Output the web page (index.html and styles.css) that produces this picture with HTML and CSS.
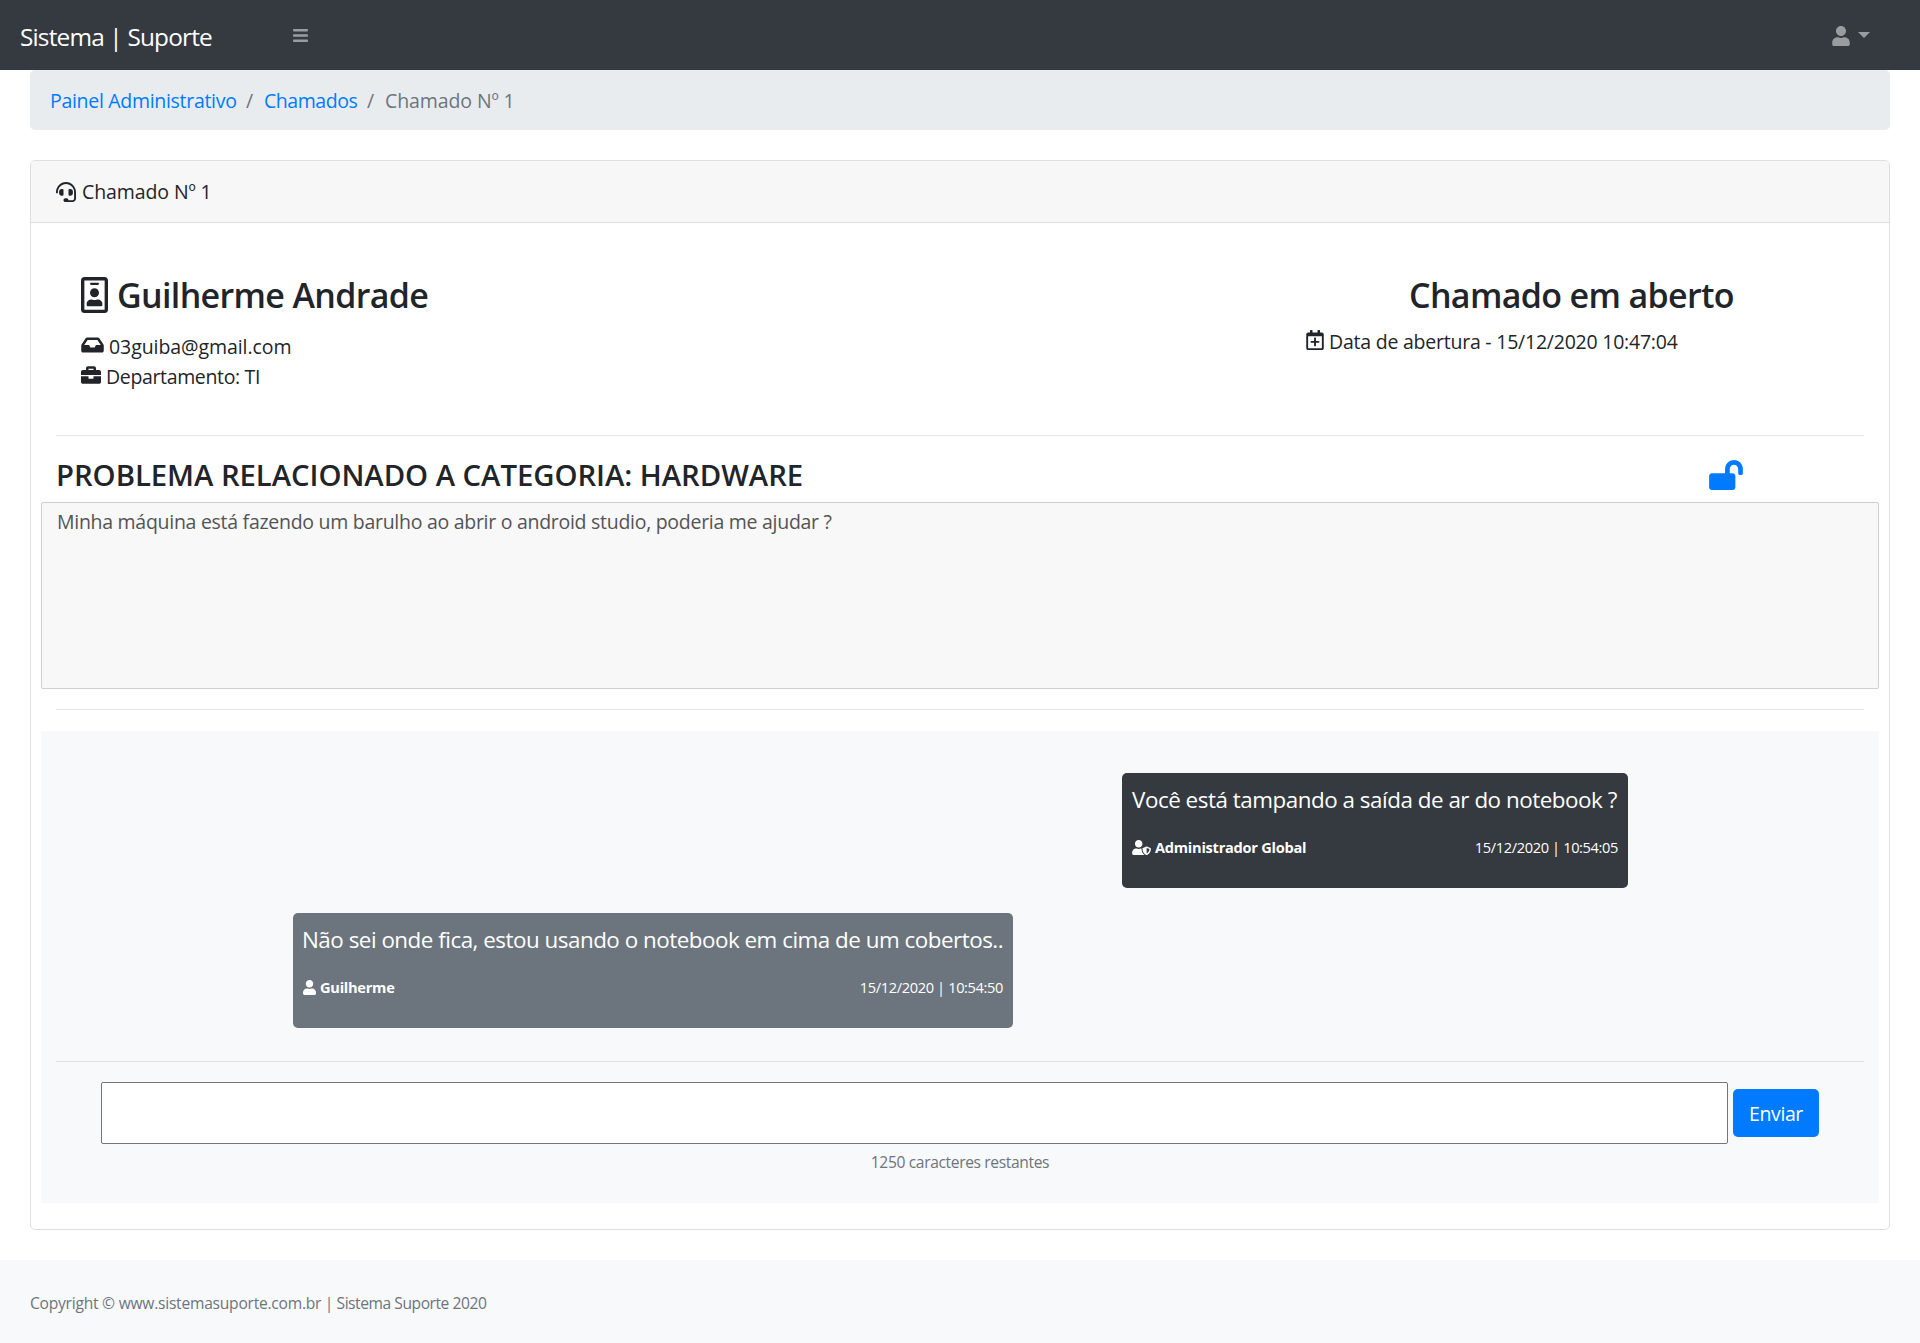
FILE: index.html
```html
<!DOCTYPE html>
<html lang="pt-br">
<head>
<meta charset="utf-8">
<title>Sistema | Suporte</title>
<link rel="stylesheet" href="styles.css">
</head>
<body>
<nav class="topnav">
  <a class="brand">Sistema | Suporte</a>
  <svg class="icon-bars" viewBox="0 0 448 512"><path d="M16 132h416c8.8 0 16-7.2 16-16V76c0-8.800-7.200-16-16-16H16C7.200 60 0 67.200 0 76v40c0 8.800 7.200 16 16 16zm0 160h416c8.800 0 16-7.200 16-16v-40c0-8.800-7.200-16-16-16H16c-8.800 0-16 7.200-16 16v40c0 8.800 7.200 16 16 16zm0 160h416c8.800 0 16-7.200 16-16v-40c0-8.800-7.200-16-16-16H16c-8.800 0-16 7.200-16 16v40c0 8.800 7.200 16 16 16z"/></svg>
  <div class="user-menu">
    <svg class="icon-user" viewBox="0 0 448 512"><path d="M224 256c70.700 0 128-57.300 128-128S294.700 0 224 0 96 57.300 96 128s57.300 128 128 128zm89.600 32h-16.700c-22.200 10.200-46.900 16-72.900 16s-50.600-5.800-72.900-16h-16.700C60.200 288 0 348.200 0 422.400V464c0 26.500 21.500 48 48 48h352c26.500 0 48-21.500 48-48v-41.600c0-74.200-60.200-134.400-134.400-134.400z"/></svg>
    <span class="caret"></span>
  </div>
</nav>

<main class="content">
  <ol class="breadcrumb">
    <li class="crumb-panel"><a>Painel Administrativo</a></li>
    <li class="slash">/</li>
    <li class="crumb-list"><a>Chamados</a></li>
    <li class="slash">/</li>
    <li class="crumb-current">Chamado Nº 1</li>
  </ol>

  <section class="card">
    <header class="card-header">
      <svg class="icon-headset" viewBox="0 0 512 512"><path d="M192 208c0-17.670-14.330-32-32-32h-16c-35.350 0-64 28.650-64 64v48c0 35.350 28.650 64 64 64h16c17.670 0 32-14.330 32-32V208zm176 144c35.350 0 64-28.650 64-64v-48c0-35.350-28.650-64-64-64h-16c-17.670 0-32 14.330-32 32v112c0 17.670 14.330 32 32 32h16zM256 0C113.180 0 4.580 118.830 0 256v16c0 8.840 7.160 16 16 16h16c8.840 0 16-7.160 16-16v-16c0-114.690 93.310-208 208-208s208 93.310 208 208h-.12c.08 2.430.12 165.720.12 165.720 0 23.350-18.930 42.280-42.280 42.280H320c0-26.510-21.490-48-48-48h-32c-26.510 0-48 21.490-48 48s21.490 48 48 48h181.720c49.860 0 90.280-40.420 90.280-90.280V256C507.420 118.830 398.820 0 256 0z"/></svg>
      <span>Chamado Nº 1</span>
    </header>

    <div class="info">
      <div class="person">
        <h3>
          <svg class="icon-badge" viewBox="0 0 384 512"><path d="M336 0H48C21.500 0 0 21.500 0 48v416c0 26.500 21.500 48 48 48h288c26.500 0 48-21.500 48-48V48c0-26.500-21.500-48-48-48zm0 464H48V48h288v416zM144 112h96c8.800 0 16-7.200 16-16s-7.200-16-16-16h-96c-8.800 0-16 7.200-16 16s7.200 16 16 16zm48 176c35.300 0 64-28.700 64-64s-28.700-64-64-64-64 28.700-64 64 28.700 64 64 64zm-89.600 128h179.200c12.400 0 22.400-8.600 22.400-19.200v-19.200c0-31.800-30.100-57.600-67.200-57.600-10.800 0-18.700 8-44.800 8-26.900 0-33.400-8-44.800-8-37.100 0-67.200 25.800-67.200 57.600v19.200c0 10.600 10 19.200 22.400 19.200z"/></svg>
          <span>Guilherme Andrade</span>
        </h3>
        <p class="email">
          <svg class="icon-inbox" viewBox="0 0 576 512"><path d="M567.938 243.908L462.250 85.374A48.003 48.003 0 0 0 422.311 64H153.689a48 48 0 0 0-39.938 21.374L8.062 243.908A47.994 47.994 0 0 0 0 270.533V400c0 26.510 21.490 48 48 48h480c26.510 0 48-21.490 48-48V270.533a47.994 47.994 0 0 0-8.062-26.625zM162.252 128h251.497l85.333 128H376l-32 64H232l-32-64H76.918l85.334-128z"/></svg>
          <span>03guiba@gmail.com</span>
        </p>
        <p class="department">
          <svg class="icon-briefcase" viewBox="0 0 512 512"><path d="M320 336c0 8.840-7.160 16-16 16h-96c-8.840 0-16-7.160-16-16v-48H0v144c0 25.600 22.400 48 48 48h416c25.600 0 48-22.400 48-48V288H320v48zm144-208h-80V80c0-25.600-22.400-48-48-48H176c-25.600 0-48 22.400-48 48v48H48c-25.600 0-48 22.400-48 48v80h512v-80c0-25.600-22.400-48-48-48zm-144 0H192V96h128v32z"/></svg>
          <span>Departamento: TI</span>
        </p>
      </div>
      <div class="status">
        <h3>Chamado em aberto</h3>
        <p>
          <svg class="icon-calendar" viewBox="0 0 448 512"><path d="M336 292v24c0 6.600-5.400 12-12 12h-76v76c0 6.600-5.400 12-12 12h-24c-6.600 0-12-5.400-12-12v-76h-76c-6.600 0-12-5.400-12-12v-24c0-6.600 5.400-12 12-12h76v-76c0-6.600 5.400-12 12-12h24c6.600 0 12 5.400 12 12v76h76c6.600 0 12 5.400 12 12zm112-180v352c0 26.500-21.500 48-48 48H48c-26.500 0-48-21.500-48-48V112c0-26.500 21.500-48 48-48h48V12c0-6.600 5.400-12 12-12h40c6.600 0 12 5.400 12 12v52h128V12c0-6.600 5.400-12 12-12h40c6.600 0 12 5.400 12 12v52h48c26.500 0 48 21.500 48 48zm-48 346V160H48v298c0 3.300 2.700 6 6 6h340c3.300 0 6-2.700 6-6z"/></svg>
          <span>Data de abertura - 15/12/2020 10:47:04</span>
        </p>
      </div>
    </div>

    <hr>

    <div class="category">
      <h4>PROBLEMA RELACIONADO A CATEGORIA: HARDWARE</h4>
      <svg class="icon-unlock" viewBox="0 0 576 512"><path d="M423.500 0C339.500.3 272 69.500 272 153.500V224H48c-26.500 0-48 21.500-48 48v192c0 26.500 21.500 48 48 48h352c26.500 0 48-21.500 48-48V272c0-26.500-21.500-48-48-48h-48v-71.100c0-39.600 31.700-72.500 71.300-72.900 40-.4 72.700 32.100 72.700 72v80c0 13.300 10.700 24 24 24h32c13.300 0 24-10.700 24-24v-80C576 68 507.500-.3 423.500 0z"/></svg>
    </div>
    <div class="description">Minha máquina está fazendo um barulho ao abrir o android studio, poderia me ajudar ?</div>

    <hr>

    <div class="chat">
      <article class="message message-admin">
        <p class="message-text">Você está tampando a saída de ar do notebook ?</p>
        <div class="message-meta">
          <svg class="icon-shield" viewBox="0 0 640 512"><path d="M622.300 271.100l-115.200-45c-4.100-1.600-12.600-3.700-22.200 0l-115.200 45c-10.700 4.200-17.700 14-17.700 24.900 0 111.600 68.700 188.800 132.900 213.900 9.600 3.700 18 1.600 22.200 0C558.400 489.900 640 420.500 640 296c0-10.900-7-20.700-17.700-24.900zM496 462.400V273.300l95.500 37.300c-5.600 87.100-60.900 135.400-95.500 151.800zM224 256c70.700 0 128-57.300 128-128S294.700 0 224 0 96 57.300 96 128s57.300 128 128 128zm96 40c0-2.500.8-4.800 1.100-7.200-2.500-.1-4.900-.8-7.500-.8h-16.700c-22.200 10.200-46.900 16-72.900 16s-50.600-5.800-72.900-16h-16.700C60.200 288 0 348.200 0 422.400V464c0 26.500 21.500 48 48 48h352c6.800 0 13.300-1.500 19.200-4-54-42.900-99.200-116.700-99.200-212z"/></svg>
          <strong>Administrador Global</strong>
          <time>15/12/2020 | 10:54:05</time>
        </div>
      </article>
      <article class="message message-client">
        <p class="message-text">Não sei onde fica, estou usando o notebook em cima de um cobertos..</p>
        <div class="message-meta">
          <svg class="icon-client" viewBox="0 0 448 512"><path d="M224 256c70.700 0 128-57.300 128-128S294.700 0 224 0 96 57.300 96 128s57.300 128 128 128zm89.600 32h-16.700c-22.200 10.200-46.900 16-72.900 16s-50.600-5.800-72.900-16h-16.700C60.200 288 0 348.200 0 422.400V464c0 26.500 21.500 48 48 48h352c26.500 0 48-21.500 48-48v-41.600c0-74.200-60.200-134.400-134.400-134.400z"/></svg>
          <strong>Guilherme</strong>
          <time>15/12/2020 | 10:54:50</time>
        </div>
      </article>
      <hr>
      <form class="reply">
        <textarea></textarea>
        <button type="button">Enviar</button>
      </form>
      <p class="remaining">1250 caracteres restantes</p>
    </div>
  </section>
</main>

<footer class="footer"><span class="copyright">Copyright © www.sistemasuporte.com.br</span> | Sistema Suporte 2020</footer>
</body>
</html>
```
FILE: styles.css
```css
* { box-sizing: border-box; }

body {
  margin: 0;
  min-height: 1343px;
  display: flex;
  flex-direction: column;
  background: #fff;
  color: #212529;
  font: 400 19.5px/30px "Open Sans", "Noto Sans", sans-serif;
  letter-spacing: -0.3px;
}

h3, h4, p, ol { margin: 0; padding: 0; }
h3, h4 { font-weight: 600; }
svg { display: block; flex: none; fill: currentColor; }

hr {
  height: 1px;
  margin: 0 25px;
  border: 0;
  background: #e5e5e5;
}

/* Top bar */
.topnav {
  display: flex;
  align-items: center;
  height: 70px;
  padding: 0 50px 0 20px;
  background: #343a40;
  color: #9a9da0;
}
.brand {
  width: 273px;
  padding-top: 3px;
  color: #fff;
  font-size: 24.4px;
  letter-spacing: -0.83px;
}
.icon-bars { width: 15px; height: 17px; }
.user-menu {
  display: flex;
  align-items: center;
  gap: 8px;
  margin-left: auto;
}
.icon-user { width: 18px; height: 20px; margin-top: 2px; }
.caret {
  border: 6px solid transparent;
  border-top-color: currentColor;
  border-bottom: 0;
}

/* Breadcrumb */
.content { padding: 0 30px 30px; }
.breadcrumb {
  display: flex;
  height: 60px;
  padding: 16px 20px 14px;
  margin-bottom: 30px;
  border-radius: 5px;
  background: #e9ecef;
  color: #6c757d;
  list-style: none;
  white-space: nowrap;
}
.breadcrumb a { color: #007bff; }
.slash { width: 28px; padding-left: 10px; }
.crumb-panel { width: 186px; }
.crumb-list { width: 93px; letter-spacing: -0.45px; }
.crumb-current { letter-spacing: -0.1px; }

/* Card */
.card {
  padding-bottom: 26px;
  border: 1px solid #dfdfdf;
  border-radius: 5px;
}
.card-header {
  display: flex;
  align-items: center;
  gap: 6px;
  height: 62px;
  padding: 0 25px;
  border-bottom: 1px solid #dfdfdf;
  border-radius: 4px 4px 0 0;
  background: #f7f7f7;
  letter-spacing: -0.1px;
}
.icon-headset { width: 20px; height: 20px; }

.info {
  display: flex;
  justify-content: space-between;
  padding: 51px 0 45px 50px;
}
.info h3 {
  display: flex;
  align-items: center;
  height: 42px;
  font-size: 34px;
  line-height: 42px;
  letter-spacing: -0.65px;
}
.person h3 { gap: 9px; margin-bottom: 14px; }
.person p, .status p { display: flex; align-items: center; }
.person p span, .status p span { padding-top: 2px; margin-bottom: -2px; }
.icon-badge { width: 27px; height: 36px; }
.icon-inbox { width: 23px; height: 20px; }
.icon-briefcase { width: 20px; height: 20px; }
.email { gap: 5px; letter-spacing: -0.07px; }
.department { gap: 5px; letter-spacing: -0.35px; }
.status { width: 583px; }
.status h3 { margin-bottom: 9px; padding-left: 103px; }
.status p { gap: 5px; letter-spacing: -0.23px; }
.icon-calendar { width: 18px; height: 20px; }

.category {
  display: flex;
  align-items: center;
  justify-content: space-between;
  height: 66px;
  padding: 12px 146px 0 25px;
}
.category h4 {
  font-size: 29.3px;
  line-height: 36px;
  letter-spacing: -0.05px;
}
.icon-unlock { width: 34px; height: 30px; color: #007bff; }

.description {
  height: 187px;
  margin: 0 10px 20px;
  padding: 4px 15px;
  border: 1px solid #cfcfcf;
  border-radius: 2px;
  background: #f8f8f8;
  color: #545454;
  letter-spacing: -0.28px;
}

/* Conversation */
.chat {
  display: flex;
  flex-direction: column;
  height: 472px;
  margin: 21px 10px 0;
  padding-top: 42px;
  background: #f8f9fa;
}
.chat hr { margin: 8px 15px 20px; background: #dfe0e1; }
.message {
  height: 115px;
  margin-bottom: 25px;
  padding: 10px 10px 9px;
  border-radius: 5px;
  color: #fff;
}
.message-admin {
  width: 506px;
  margin-left: 1081px;
  background: #343a40;
}
.message-client {
  width: 720px;
  margin-left: 252px;
  background: #6c757d;
}
.message-text {
  margin-bottom: 18px;
  font-size: 22.4px;
  line-height: 34px;
  letter-spacing: -0.47px;
  white-space: nowrap;
}
.message-client .message-text { margin-left: -1px; letter-spacing: -0.49px; }
.message-meta {
  display: flex;
  align-items: center;
  gap: 4px;
  font-size: 14.6px;
  line-height: 24px;
  letter-spacing: -0.26px;
}
.message-meta time { margin-left: auto; letter-spacing: -0.36px; }
.icon-shield { width: 19px; height: 15px; }
.icon-client { width: 13px; height: 15px; }

.reply {
  display: flex;
  align-items: center;
  gap: 5px;
  padding-left: 60px;
}
.reply textarea {
  width: 1627px;
  height: 62px;
  border: 1px solid #767676;
  border-radius: 2px;
  background: #fff;
  resize: none;
}
.reply button {
  width: 86px;
  height: 48px;
  padding: 2px 0 0;
  border: 0;
  border-radius: 5px;
  background: #007bff;
  color: #fff;
  font: inherit;
  letter-spacing: -0.4px;
}
.remaining {
  margin-top: 6px;
  color: #6c757d;
  font-size: 15.6px;
  line-height: 24px;
  letter-spacing: -0.36px;
  text-align: center;
}

/* Footer */
.footer {
  flex: 1;
  padding: 31px 30px;
  background: #f8f9fa;
  color: #6c757d;
  font-size: 15.6px;
  line-height: 24px;
  letter-spacing: -0.45px;
}
.copyright { letter-spacing: -0.24px; }
```
